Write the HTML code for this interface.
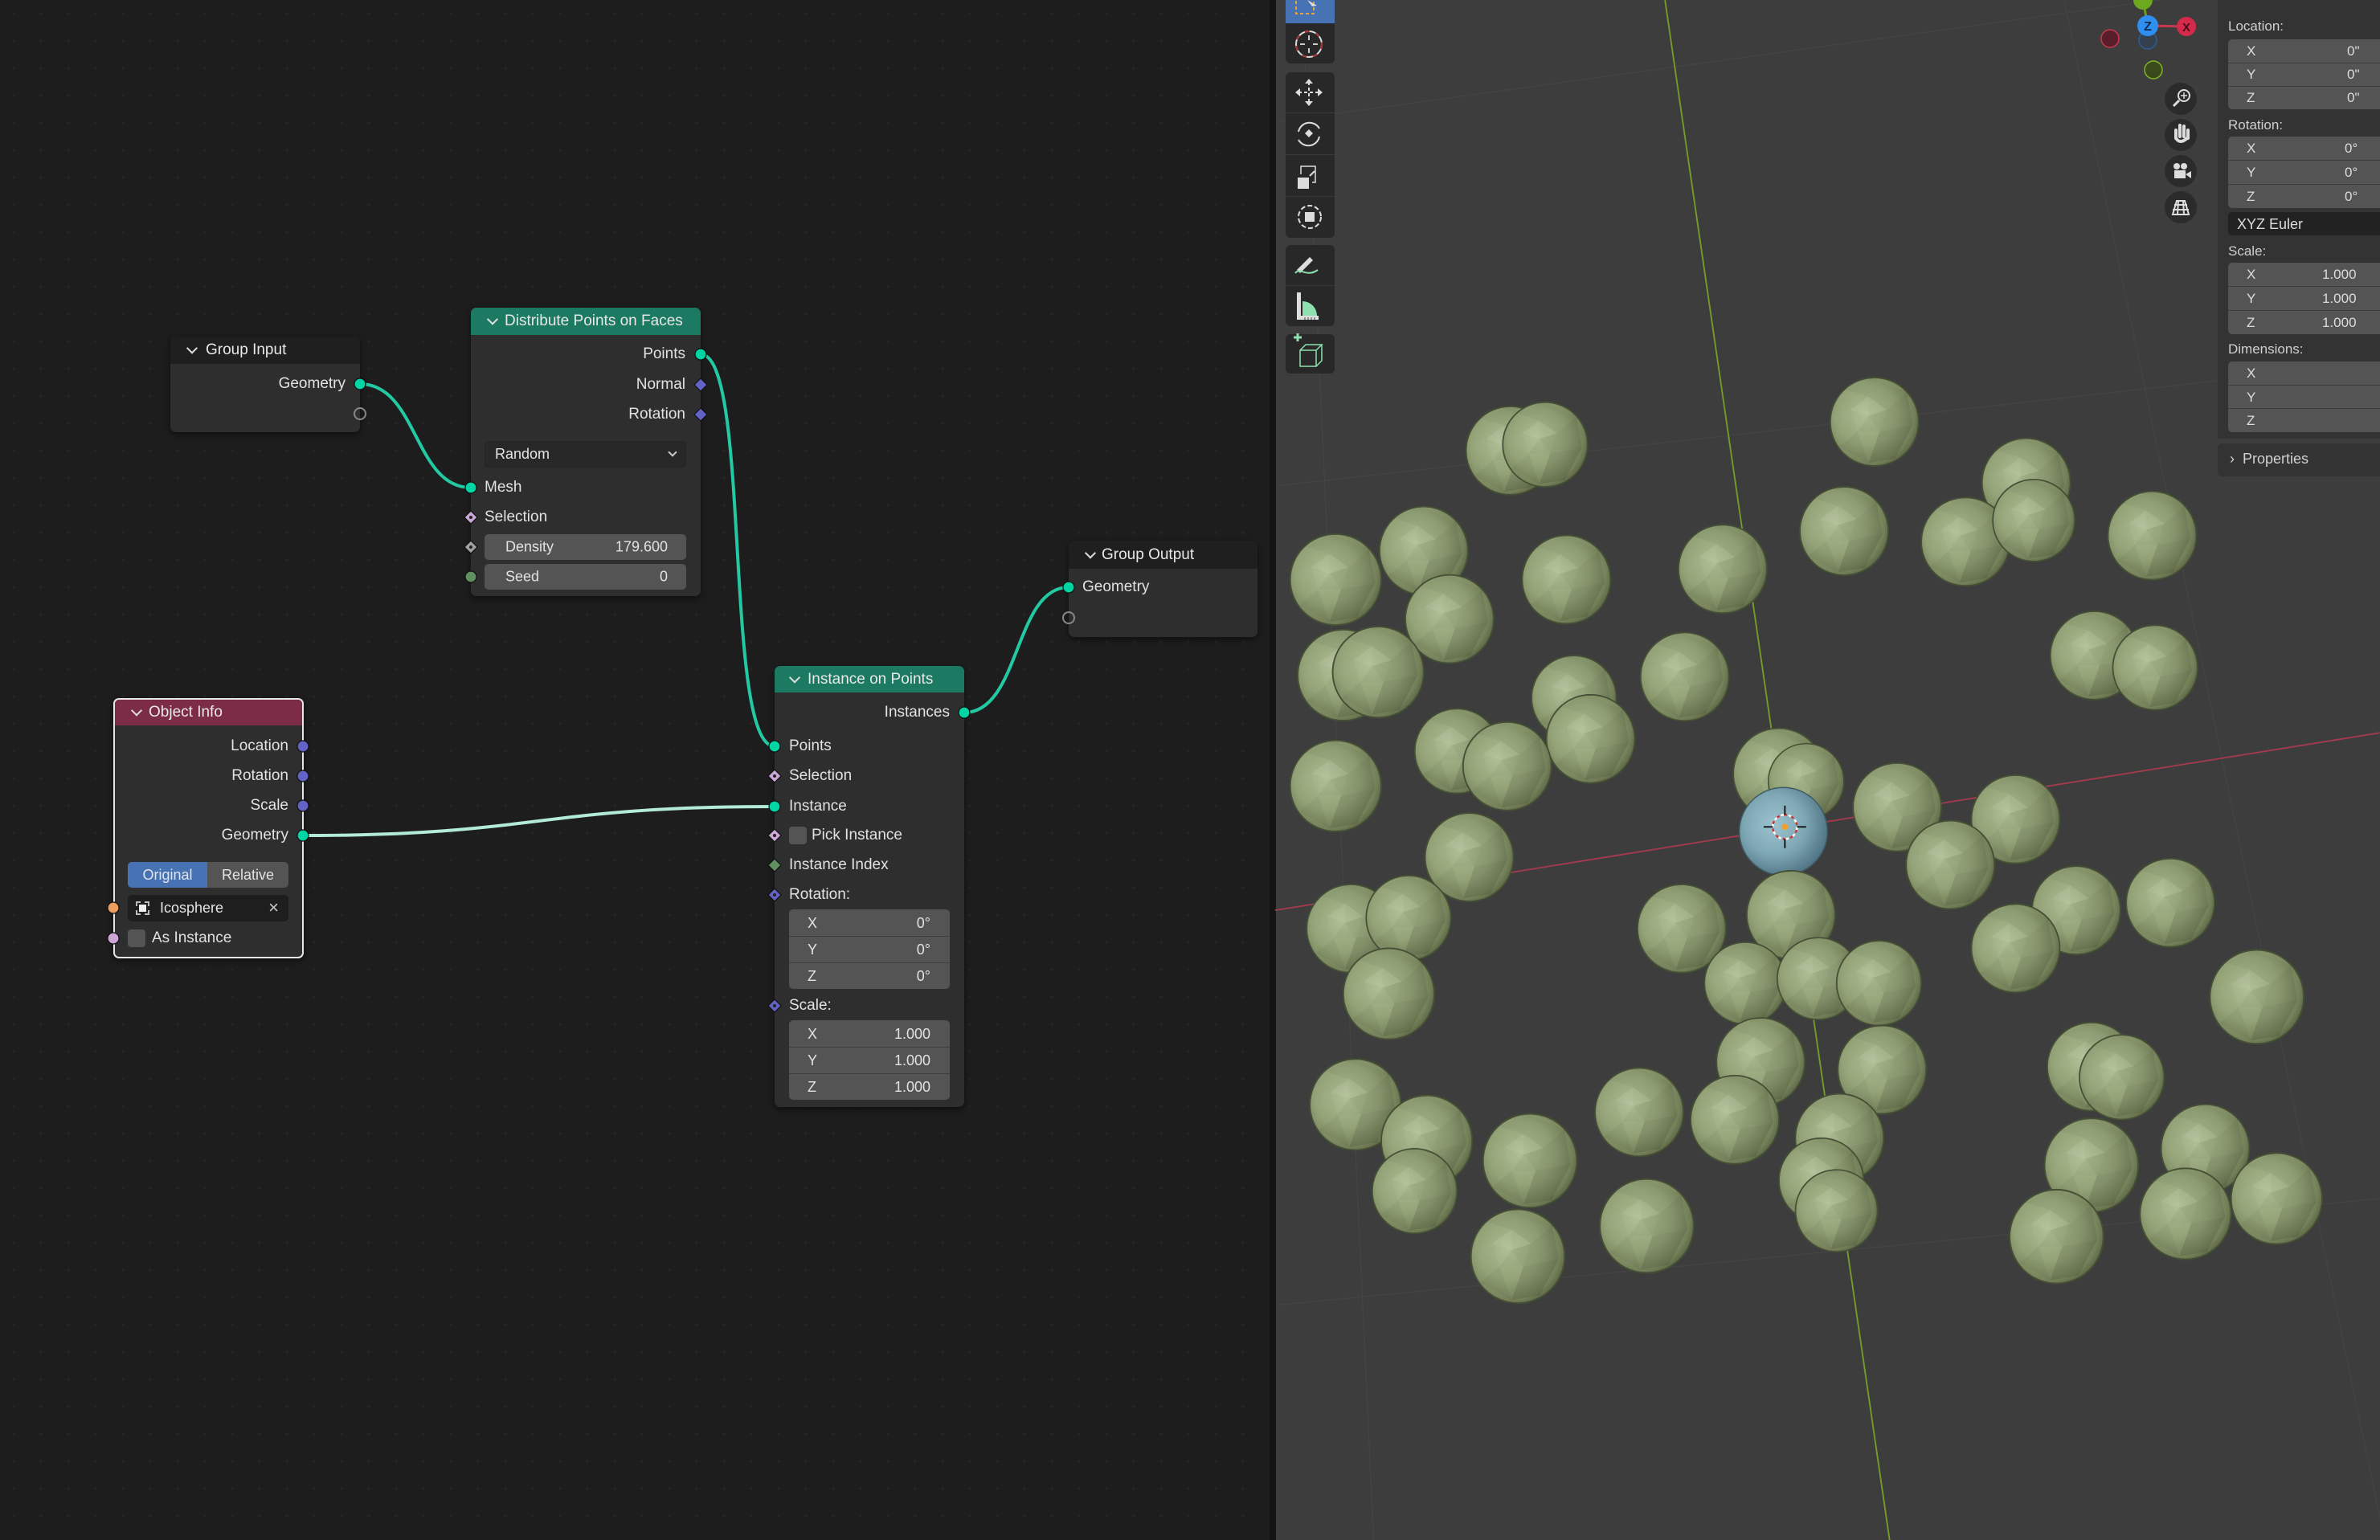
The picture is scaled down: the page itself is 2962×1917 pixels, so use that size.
<!DOCTYPE html>
<html><head><meta charset="utf-8">
<style>
*{margin:0;padding:0;box-sizing:border-box}
body{width:2962px;height:1917px;overflow:hidden;background:#1d1d1d;font-family:"Liberation Sans","DejaVu Sans",sans-serif;color:#e4e4e4;position:relative}
.abs{position:absolute}
#ne{position:absolute;left:0;top:0;width:1580px;height:1917px;background-color:#1d1d1d;background-image:radial-gradient(circle,#252525 1.5px,transparent 2px);background-size:34px 34px}
#sep{position:absolute;left:1580px;top:0;width:8px;height:1917px;background:#141414}
#vp{position:absolute;left:1588px;top:0;width:1374px;height:1917px;background:#3d3d3d;overflow:hidden}
.node{position:absolute;background:#2e2e2e;border-radius:7px;overflow:hidden;box-shadow:0 3px 8px rgba(0,0,0,.5)}
.hdr{position:absolute;left:0;top:0;width:100%;font-size:19px;color:#e8e8e8}
.hdr span.t{position:absolute;top:50%;transform:translateY(-50%)}
.chev{position:absolute;top:50%;width:10px;height:10px;border-right:2px solid #ddd;border-bottom:2px solid #ddd;transform:translateY(-75%) rotate(45deg)}
.r{position:absolute;font-size:19px;line-height:24px;height:24px;white-space:nowrap;color:#e2e2e2}
.fld{position:absolute;background:#545454;border-radius:5px;font-size:18px;color:#e2e2e2}
.fld .l{position:absolute;top:50%;transform:translateY(-50%)}
.fld .v{position:absolute;top:50%;transform:translateY(-50%)}
.tb{position:absolute;left:1600px;width:61px;background:#282828;border-radius:6px}
.np{position:absolute;font-size:17px;color:#d0d0d0}
.nf{position:absolute;left:2773px;width:200px;background:#545454;border-radius:5px}
.nf div{position:absolute;font-size:17px;color:#dcdcdc}
.ln{position:absolute;left:2773px;width:189px;height:1px;background:#3d3d3d}
</style></head><body>
<div id="ne"></div>
<div id="sep"></div>
<div id="vp"></div>

<svg class="abs" style="left:0;top:0" width="2962" height="1917" viewBox="0 0 1568 1015">
<defs>
<radialGradient id="g" cx="0.4" cy="0.42" r="0.68">
<stop offset="0" stop-color="#adbd92"/><stop offset="0.5" stop-color="#93a277"/><stop offset="0.82" stop-color="#737f58"/><stop offset="1" stop-color="#4c563a"/></radialGradient>
<radialGradient id="b" cx="0.4" cy="0.42" r="0.68">
<stop offset="0" stop-color="#9cc3cf"/><stop offset="0.5" stop-color="#7fa8b5"/><stop offset="1" stop-color="#46697a"/></radialGradient>
<g id="ico">
<circle r="30" fill="url(#g)" stroke="#454f35" stroke-width="1"/>
<g stroke="none">
<polygon points="-4,-4 -4,-17 8.4,-8" fill="rgba(255,255,255,0.06)"/>
<polygon points="-4,-4 8.4,-8 3.6,6.5" fill="rgba(0,0,0,0.05)"/>
<polygon points="-4,-4 3.6,6.5 -11.6,6.5" fill="rgba(0,0,0,0.02)"/>
<polygon points="-4,-4 -11.6,6.5 -16.4,-8" fill="rgba(255,255,255,0.04)"/>
<polygon points="-4,-4 -16.4,-8 -4,-17" fill="rgba(255,255,255,0.1)"/>
<polygon points="8.4,-8 22,-20 26,2 3.6,6.5" fill="rgba(0,0,0,0.07)"/>
<polygon points="3.6,6.5 26,2 14,25 -4,28" fill="rgba(0,0,0,0.1)"/>
<polygon points="-11.6,6.5 -4,28 -24,17" fill="rgba(0,0,0,0.04)"/>
<polygon points="-16.4,-8 -24,17 -29,-6" fill="rgba(255,255,255,0.02)"/>
<polygon points="-4,-17 -20,-22 -2,-30 22,-20 8.4,-8" fill="rgba(0,0,0,0.03)"/>
</g>
</g>
</defs>
<g stroke="#444" stroke-width="0.7" fill="none">
<line x1="843" y1="80" x2="1568" y2="-20"/>
<line x1="843" y1="320" x2="1470" y2="250"/>
<line x1="858" y1="0" x2="905" y2="1015"/>
<line x1="1360" y1="0" x2="1568" y2="1000"/>
<line x1="843" y1="860" x2="1568" y2="790"/>
</g>
<line x1="1097" y1="0" x2="1245" y2="1015" stroke="#779a2a" stroke-width="1"/>
<line x1="840" y1="600" x2="1568" y2="483" stroke="#a33b4d" stroke-width="1"/>
<g>
<use href="#ico" transform="translate(1235,278) scale(0.97)"/>
<use href="#ico" transform="translate(995,297) scale(0.97)"/><use href="#ico" transform="translate(1018,293) scale(0.93)"/>
<use href="#ico" transform="translate(1335,318) scale(0.97)"/>
<use href="#ico" transform="translate(938,363) scale(0.97)"/><use href="#ico" transform="translate(1215,350) scale(0.97)"/><use href="#ico" transform="translate(1295,357) scale(0.97)"/><use href="#ico" transform="translate(1340,343) scale(0.9)"/><use href="#ico" transform="translate(1418,353) scale(0.97)"/>
<use href="#ico" transform="translate(1032,382) scale(0.97)"/><use href="#ico" transform="translate(1135,375) scale(0.97)"/><use href="#ico" transform="translate(880,382) scale(1)"/>
<use href="#ico" transform="translate(955,408) scale(0.97)"/>
<use href="#ico" transform="translate(1380,432) scale(0.97)"/><use href="#ico" transform="translate(1420,440) scale(0.93)"/>
<use href="#ico" transform="translate(885,445) scale(1)"/><use href="#ico" transform="translate(908,443) scale(1)"/><use href="#ico" transform="translate(1110,446) scale(0.97)"/>
<use href="#ico" transform="translate(1037,460) scale(0.93)"/>
<use href="#ico" transform="translate(1048,487) scale(0.97)"/><use href="#ico" transform="translate(960,495) scale(0.93)"/><use href="#ico" transform="translate(993,505) scale(0.97)"/>
<use href="#ico" transform="translate(1172,510) scale(1)"/><use href="#ico" transform="translate(1190,515) scale(0.83)"/><use href="#ico" transform="translate(880,518) scale(1)"/>
<use href="#ico" transform="translate(1250,532) scale(0.97)"/><use href="#ico" transform="translate(1328,540) scale(0.97)"/>
</g>
<circle cx="1175" cy="548" r="29" fill="url(#b)" stroke="#3f5c66" stroke-width="0.8"/>
<g>
<use href="#ico" transform="translate(968,565) scale(0.97)"/><use href="#ico" transform="translate(1285,570) scale(0.97)"/>
<use href="#ico" transform="translate(1430,595) scale(0.97)"/><use href="#ico" transform="translate(1368,600) scale(0.97)"/><use href="#ico" transform="translate(1180,603) scale(0.97)"/>
<use href="#ico" transform="translate(890,612) scale(0.97)"/><use href="#ico" transform="translate(928,605) scale(0.93)"/><use href="#ico" transform="translate(1108,612) scale(0.97)"/>
<use href="#ico" transform="translate(1328,625) scale(0.97)"/>
<use href="#ico" transform="translate(1150,648) scale(0.9)"/><use href="#ico" transform="translate(1198,645) scale(0.9)"/><use href="#ico" transform="translate(1238,648) scale(0.93)"/>
<use href="#ico" transform="translate(915,655) scale(1)"/><use href="#ico" transform="translate(1487,657) scale(1.03)"/>
<use href="#ico" transform="translate(1160,700) scale(0.97)"/><use href="#ico" transform="translate(1240,705) scale(0.97)"/><use href="#ico" transform="translate(1378,703) scale(0.97)"/><use href="#ico" transform="translate(1398,710) scale(0.93)"/>
<use href="#ico" transform="translate(893,728) scale(1)"/><use href="#ico" transform="translate(1080,733) scale(0.97)"/><use href="#ico" transform="translate(1143,738) scale(0.97)"/>
<use href="#ico" transform="translate(1212,750) scale(0.97)"/><use href="#ico" transform="translate(940,752) scale(1)"/><use href="#ico" transform="translate(1453,757) scale(0.97)"/>
<use href="#ico" transform="translate(1008,765) scale(1.03)"/><use href="#ico" transform="translate(1378,768) scale(1.03)"/>
<use href="#ico" transform="translate(1200,778) scale(0.93)"/><use href="#ico" transform="translate(932,785) scale(0.93)"/><use href="#ico" transform="translate(1500,790) scale(1)"/>
<use href="#ico" transform="translate(1210,798) scale(0.9)"/><use href="#ico" transform="translate(1440,800) scale(1)"/><use href="#ico" transform="translate(1085,808) scale(1.03)"/>
<use href="#ico" transform="translate(1355,815) scale(1.03)"/><use href="#ico" transform="translate(1000,828) scale(1.03)"/>
</g>
<g transform="translate(1176,545)">
<circle r="8" fill="none" stroke="#fff" stroke-width="1.3" stroke-dasharray="3 2"/>
<circle r="8" fill="none" stroke="#c33" stroke-width="1.3" stroke-dasharray="2 3" stroke-dashoffset="3"/>
<path d="M-14 0h6M8 0h6M0 -14v6M0 8v6" stroke="#111" stroke-width="1"/>
<circle r="2" fill="#f29d2c"/>
</g>
</svg>

<!-- toolbar -->
<div class="tb" style="top:-6px;height:85px"></div>
<div class="abs" style="left:1600px;top:-6px;width:61px;height:35px;background:#4772b3;border-radius:6px 6px 0 0"></div>
<div class="tb" style="top:90px;height:206px"></div>
<div class="tb" style="top:305px;height:101px"></div>
<div class="tb" style="top:416px;height:49px"></div>
<div class="abs" style="left:1600px;top:140px;width:61px;height:1px;background:#3a3a3a"></div>
<div class="abs" style="left:1600px;top:192px;width:61px;height:1px;background:#3a3a3a"></div>
<div class="abs" style="left:1600px;top:244px;width:61px;height:1px;background:#3a3a3a"></div>
<div class="abs" style="left:1600px;top:355px;width:61px;height:1px;background:#3a3a3a"></div>
<svg class="abs" style="left:1600px;top:0" width="61" height="470">
<rect x="13" y="-4" width="22" height="21" fill="none" stroke="#e8a33a" stroke-width="2" stroke-dasharray="4 3"/>
<path d="M27 0l12 7-6 1 z" fill="#ddd"/>
<circle cx="29" cy="55" r="16" fill="none" stroke="#ddd" stroke-width="2"/>
<circle cx="29" cy="55" r="16" fill="none" stroke="#a33" stroke-width="2" stroke-dasharray="6 8"/>
<path d="M29 44v6M29 60v6M18 55h6M34 55h6" stroke="#ccc" stroke-width="2"/>
<g fill="#ddd" stroke="#ddd" stroke-width="2">
<path d="M29 102v26M16 115h26" stroke-dasharray="4 3"/>
<path d="M29 98l-5 6h10z M29 132l-5-6h10z M12 115l6-5v10z M46 115l-6-5v10z" stroke="none"/>
<path d="M16 164a14 14 0 0 1 26 -4 M42 170a14 14 0 0 1 -26 4" fill="none"/>
<path d="M24 166l5-5 5 5-5 5z" stroke="none"/>
<rect x="15" y="221" width="14" height="14" stroke="none"/>
<path d="M19 217v-10h18v20h-4" fill="none" stroke-width="1.5"/>
<path d="M30 219l6-6"/>
<rect x="24" y="264" width="12" height="12" stroke="none"/>
<circle cx="30" cy="270" r="14" fill="none" stroke-dasharray="6 3"/>
<path d="M14 336l16-16 4 4-16 16z" stroke="none"/>
<path d="M14 398v-34h5v29h22v5z" stroke="none"/>
</g>
<path d="M12 340c6-8 14 6 28-4" stroke="#8ee0b0" stroke-width="2" fill="none"/>
<path d="M21 393v-18a18 18 0 0 1 18 18z" fill="#8ee0b0"/>
<path d="M36 398v-3M32 398v-3M28 398v-3M24 398v-3" stroke="#444" stroke-width="1"/>
<path d="M15 425v-10M10 420h10" stroke="#8ee0b0" stroke-width="3"/>
<path d="M18 436h20v20h-20z M18 436l7-7h20l-7 7 M38 456l7-7v-20" stroke="#8ee0b0" stroke-width="1.5" fill="none"/>
</svg>

<!-- gizmo -->
<svg class="abs" style="left:2580px;top:0" width="180" height="290">
<line x1="93" y1="32" x2="87" y2="0" stroke="#6c9b1c" stroke-width="3"/>
<line x1="93" y1="32" x2="141" y2="33" stroke="#c8384f" stroke-width="3"/>
<circle cx="87" cy="0" r="12" fill="#6ea81e"/>
<circle cx="46" cy="48" r="11" fill="#5a1e2a" stroke="#c8384f" stroke-width="1.5"/>
<circle cx="93" cy="50" r="11" fill="#35404e" stroke="#2f5c96" stroke-width="1.5"/>
<circle cx="100" cy="87" r="11" fill="#3b4a1a" stroke="#7fb52a" stroke-width="1.5"/>
<circle cx="93" cy="32" r="13" fill="#2f8ff0"/>
<text x="93" y="38" text-anchor="middle" font-size="16" font-weight="bold" fill="#0f2a50" font-family="Liberation Sans">Z</text>
<circle cx="141" cy="33" r="12" fill="#d42a4b"/>
<text x="141" y="39" text-anchor="middle" font-size="15" font-weight="bold" fill="#4a0c18" font-family="Liberation Sans">X</text>
<g fill="#2b2b2b"><circle cx="134" cy="123" r="20"/><circle cx="134" cy="168" r="20"/><circle cx="134" cy="213" r="20"/><circle cx="134" cy="258" r="20"/></g>
<g fill="#ddd" stroke="#ddd">
<circle cx="138" cy="119" r="7" fill="none" stroke-width="2"/><path d="M132 125l-7 7" stroke-width="3"/><path d="M138 115v8M134 119h8" stroke-width="1.5"/>
<path d="M128 172v-10M133 170v-14M138 170v-13M143 172v-10M128 172q5 8 14 0" stroke-width="4" stroke-linecap="round" fill="none"/>
<rect x="126" y="212" width="14" height="10" stroke="none"/><circle cx="129" cy="207" r="4" stroke="none"/><circle cx="138" cy="207" r="4" stroke="none"/><path d="M140 217l7-4v9z" stroke="none"/>
<path d="M124 267l5-17h10l5 17z M124 261h20M126 255h16M131 250l-1 17M137 250l1 17" fill="none" stroke-width="2"/>
</g>
</svg>

<!-- N panel -->
<div class="abs" style="left:2760px;top:0;width:202px;height:546px;background:#333;"></div>
<div class="abs" style="left:2760px;top:552px;width:202px;height:41px;background:#333;border-radius:5px 0 0 5px"></div>
<div class="np" style="left:2773px;top:23px">Location:</div>
<div class="nf" style="top:49px;height:87px"><div style="left:23px;top:5px">X</div><div style="left:23px;top:34px">Y</div><div style="left:23px;top:63px">Z</div><div style="left:148px;top:5px">0"</div><div style="left:148px;top:34px">0"</div><div style="left:148px;top:63px">0"</div></div>
<div class="ln" style="top:78px"></div><div class="ln" style="top:107px"></div>
<div class="np" style="left:2773px;top:146px">Rotation:</div>
<div class="nf" style="top:170px;height:89px"><div style="left:23px;top:5px">X</div><div style="left:23px;top:35px">Y</div><div style="left:23px;top:65px">Z</div><div style="left:145px;top:5px">0°</div><div style="left:145px;top:35px">0°</div><div style="left:145px;top:65px">0°</div></div>
<div class="ln" style="top:199px"></div><div class="ln" style="top:229px"></div>
<div class="nf" style="top:264px;height:29px;background:#222"><div style="left:11px;top:5px;font-size:18px">XYZ Euler</div></div>
<div class="np" style="left:2773px;top:303px">Scale:</div>
<div class="nf" style="top:327px;height:89px"><div style="left:23px;top:5px">X</div><div style="left:23px;top:35px">Y</div><div style="left:23px;top:65px">Z</div><div style="left:117px;top:5px">1.000</div><div style="left:117px;top:35px">1.000</div><div style="left:117px;top:65px">1.000</div></div>
<div class="ln" style="top:356px"></div><div class="ln" style="top:386px"></div>
<div class="np" style="left:2773px;top:425px">Dimensions:</div>
<div class="nf" style="top:450px;height:88px"><div style="left:23px;top:5px">X</div><div style="left:23px;top:35px">Y</div><div style="left:23px;top:64px">Z</div></div>
<div class="ln" style="top:479px"></div><div class="ln" style="top:508px"></div>
<div class="np" style="left:2775px;top:561px;font-size:18px">›&nbsp; Properties</div>

<!-- links -->
<svg class="abs" style="left:0;top:0" width="1580" height="1917">
<g fill="none" stroke-width="4">
<path d="M448 478C520 478 515 607 586 607" stroke="#22c9a2"/>
<path d="M872 441C935 441 900 929 964 929" stroke="#22c9a2"/>
<path d="M377 1040C670 1040 670 1004 964 1004" stroke="#b4ead8"/>
<path d="M1200 887C1270 887 1262 731 1330 731" stroke="#22c9a2"/>
</g>
</svg>

<!-- Group Input -->
<div class="node" style="left:212px;top:419px;width:236px;height:119px">
<div class="hdr" style="height:34px;background:#1f1f1f"><div class="chev" style="left:22px"></div><span class="t" style="left:44px">Group Input</span></div>
<div class="r" style="right:18px;top:47px">Geometry</div>
</div>

<!-- Distribute -->
<div class="node" style="left:586px;top:383px;width:286px;height:359px">
<div class="hdr" style="height:34px;background:#1d7a62"><div class="chev" style="left:22px"></div><span class="t" style="left:42px">Distribute Points on Faces</span></div>
<div class="r" style="right:19px;top:46px">Points</div>
<div class="r" style="right:19px;top:84px">Normal</div>
<div class="r" style="right:19px;top:121px">Rotation</div>
<div class="abs" style="left:17px;top:166px;width:251px;height:33px;background:#282828;border:1px solid #242424;border-radius:5px;font-size:18px"><span class="abs" style="left:12px;top:5px">Random</span><div class="abs" style="right:12px;top:9px;width:8px;height:8px;border-right:2px solid #ccc;border-bottom:2px solid #ccc;transform:rotate(45deg)"></div></div>
<div class="r" style="left:17px;top:212px">Mesh</div>
<div class="r" style="left:17px;top:249px">Selection</div>
<div class="fld" style="left:17px;top:282px;width:251px;height:32px"><span class="l" style="left:26px">Density</span><span class="v" style="right:23px">179.600</span></div>
<div class="fld" style="left:17px;top:319px;width:251px;height:32px"><span class="l" style="left:26px">Seed</span><span class="v" style="right:23px">0</span></div>
</div>

<!-- Object Info -->
<div class="node" style="left:141px;top:869px;width:237px;height:324px;border:2px solid #e6e6e6">
<div class="hdr" style="height:32px;background:#7d2c48"><div class="chev" style="left:22px"></div><span class="t" style="left:42px">Object Info</span></div>
<div class="r" style="right:17px;top:46px">Location</div>
<div class="r" style="right:17px;top:83px">Rotation</div>
<div class="r" style="right:17px;top:120px">Scale</div>
<div class="r" style="right:17px;top:157px">Geometry</div>
<div class="abs" style="left:16px;top:202px;width:99px;height:32px;background:#4772b3;border-radius:5px 0 0 5px;font-size:18px;text-align:center;line-height:32px">Original</div>
<div class="abs" style="left:115px;top:202px;width:101px;height:32px;background:#545454;border-radius:0 5px 5px 0;font-size:18px;text-align:center;line-height:32px">Relative</div>
<div class="abs" style="left:16px;top:243px;width:200px;height:33px;background:#1e1e1e;border-radius:5px;font-size:18px">
<div class="abs" style="left:10px;top:8px;width:17px;height:17px;border:2px dashed #bbb"></div><div class="abs" style="left:14px;top:12px;width:9px;height:9px;background:#eee"></div>
<span class="abs" style="left:40px;top:6px">Icosphere</span><span class="abs" style="right:12px;top:3px;font-size:22px;color:#ccc">×</span></div>
<div class="abs" style="left:16px;top:286px;width:22px;height:22px;background:#545454;border-radius:4px"></div>
<div class="r" style="left:46px;top:285px">As Instance</div>
</div>

<!-- Instance on Points -->
<div class="node" style="left:964px;top:829px;width:236px;height:549px">
<div class="hdr" style="height:33px;background:#1d7a62"><div class="chev" style="left:20px"></div><span class="t" style="left:41px">Instance on Points</span></div>
<div class="r" style="right:18px;top:46px">Instances</div>
<div class="r" style="left:18px;top:88px">Points</div>
<div class="r" style="left:18px;top:125px">Selection</div>
<div class="r" style="left:18px;top:163px">Instance</div>
<div class="abs" style="left:18px;top:200px;width:22px;height:22px;background:#545454;border-radius:4px"></div>
<div class="r" style="left:46px;top:199px">Pick Instance</div>
<div class="r" style="left:18px;top:236px">Instance Index</div>
<div class="r" style="left:18px;top:273px">Rotation:</div>
<div class="fld" style="left:18px;top:303px;width:200px;height:99px"></div>
<div class="r" style="left:41px;top:308px;font-size:18px">X</div><div class="r" style="right:42px;top:308px;font-size:18px">0°</div>
<div class="r" style="left:41px;top:341px;font-size:18px">Y</div><div class="r" style="right:42px;top:341px;font-size:18px">0°</div>
<div class="r" style="left:41px;top:374px;font-size:18px">Z</div><div class="r" style="right:42px;top:374px;font-size:18px">0°</div>
<div class="abs" style="left:18px;top:336px;width:200px;height:1px;background:#3e3e3e"></div>
<div class="abs" style="left:18px;top:369px;width:200px;height:1px;background:#3e3e3e"></div>
<div class="r" style="left:18px;top:411px">Scale:</div>
<div class="fld" style="left:18px;top:441px;width:200px;height:99px"></div>
<div class="r" style="left:41px;top:446px;font-size:18px">X</div><div class="r" style="right:42px;top:446px;font-size:18px">1.000</div>
<div class="r" style="left:41px;top:479px;font-size:18px">Y</div><div class="r" style="right:42px;top:479px;font-size:18px">1.000</div>
<div class="r" style="left:41px;top:512px;font-size:18px">Z</div><div class="r" style="right:42px;top:512px;font-size:18px">1.000</div>
<div class="abs" style="left:18px;top:474px;width:200px;height:1px;background:#3e3e3e"></div>
<div class="abs" style="left:18px;top:507px;width:200px;height:1px;background:#3e3e3e"></div>
</div>

<!-- Group Output -->
<div class="node" style="left:1330px;top:673px;width:235px;height:120px">
<div class="hdr" style="height:35px;background:#1f1f1f"><div class="chev" style="left:22px"></div><span class="t" style="left:41px">Group Output</span></div>
<div class="r" style="left:17px;top:46px">Geometry</div>
</div>

<!-- sockets -->
<svg class="abs" style="left:0;top:0" width="1580" height="1917">
<g stroke="#111" stroke-width="1.2">
<circle cx="448" cy="478" r="7" fill="#00d6a3"/>
<circle cx="448" cy="515" r="7" fill="none" stroke="#888" stroke-width="2"/>
<circle cx="872" cy="441" r="7" fill="#00d6a3"/>
<path d="M872 471l8 8-8 8-8-8z" fill="#6363c7"/>
<path d="M872 508l8 8-8 8-8-8z" fill="#6363c7"/>
<circle cx="586" cy="607" r="7" fill="#00d6a3"/>
<path d="M586 636l8 8-8 8-8-8z" fill="#cca6d6"/><circle cx="586" cy="644" r="2" fill="#222" stroke="none"/>
<path d="M586 673l8 8-8 8-8-8z" fill="#a1a1a1"/><circle cx="586" cy="681" r="2" fill="#222" stroke="none"/>
<circle cx="586" cy="718" r="7" fill="#5f9060"/>
<circle cx="377" cy="929" r="7" fill="#6363c7"/>
<circle cx="377" cy="966" r="7" fill="#6363c7"/>
<circle cx="377" cy="1003" r="7" fill="#6363c7"/>
<circle cx="377" cy="1040" r="7" fill="#00d6a3"/>
<circle cx="141" cy="1130" r="7" fill="#ed9e5c"/>
<circle cx="141" cy="1168" r="7" fill="#cca6d6"/>
<circle cx="1200" cy="887" r="7" fill="#00d6a3"/>
<circle cx="964" cy="929" r="7" fill="#00d6a3"/>
<path d="M964 958l8 8-8 8-8-8z" fill="#cca6d6"/><circle cx="964" cy="966" r="2" fill="#222" stroke="none"/>
<circle cx="964" cy="1004" r="7" fill="#00d6a3"/>
<path d="M964 1032l8 8-8 8-8-8z" fill="#cca6d6"/><circle cx="964" cy="1040" r="2" fill="#222" stroke="none"/>
<path d="M964 1069l8 8-8 8-8-8z" fill="#5f9060"/>
<path d="M964 1106l8 8-8 8-8-8z" fill="#6363c7"/><circle cx="964" cy="1114" r="2" fill="#222" stroke="none"/>
<path d="M964 1244l8 8-8 8-8-8z" fill="#6363c7"/><circle cx="964" cy="1252" r="2" fill="#222" stroke="none"/>
<circle cx="1330" cy="731" r="7" fill="#00d6a3"/>
<circle cx="1330" cy="769" r="7" fill="none" stroke="#888" stroke-width="2"/>
</g>
</svg>
</body></html>
